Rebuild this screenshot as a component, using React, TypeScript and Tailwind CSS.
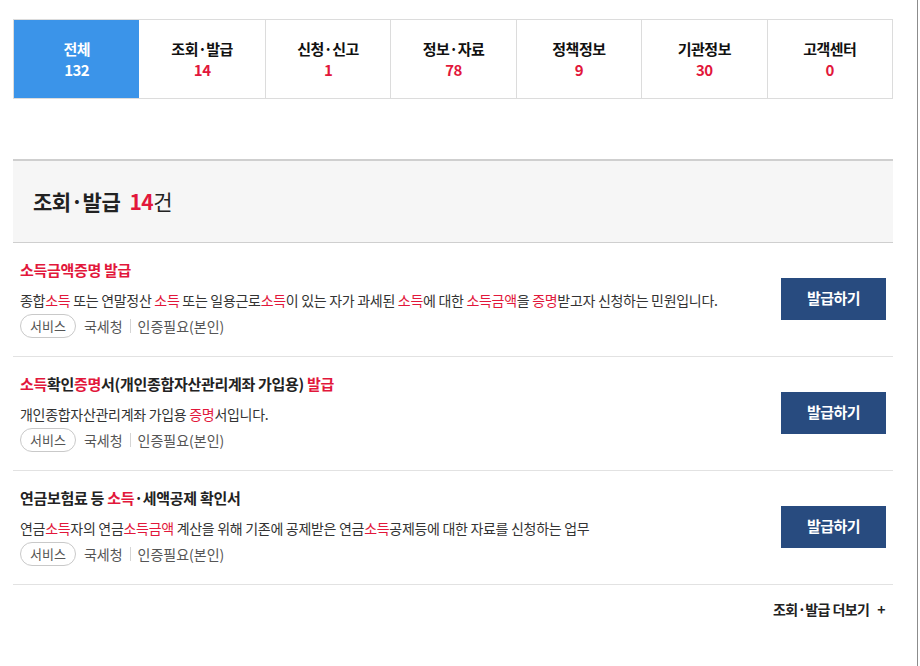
import React from "react"

const tabs = [
  { name: "전체", count: 132 },
  { name: "조회·발급", count: 14 },
  { name: "신청·신고", count: 1 },
  { name: "정보·자료", count: 78 },
  { name: "정책정보", count: 9 },
  { name: "기관정보", count: 30 },
  { name: "고객센터", count: 0 },
]

type Part = string | { hl: string }

interface Item {
  title: Part[]
  desc: Part[]
}

const items: Item[] = [
  {
    title: [{ hl: "소득금액증명 발급" }],
    desc: [
      "종합",
      { hl: "소득" },
      " 또는 연말정산 ",
      { hl: "소득" },
      " 또는 일용근로",
      { hl: "소득" },
      "이 있는 자가 과세된 ",
      { hl: "소득" },
      "에 대한 ",
      { hl: "소득금액" },
      "을 ",
      { hl: "증명" },
      "받고자 신청하는 민원입니다.",
    ],
  },
  {
    title: [{ hl: "소득" }, "확인", { hl: "증명" }, "서(개인종합자산관리계좌 가입용) ", { hl: "발급" }],
    desc: ["개인종합자산관리계좌 가입용 ", { hl: "증명" }, "서입니다."],
  },
  {
    title: ["연금보험료 등 ", { hl: "소득" }, "·세액공제 확인서"],
    desc: [
      "연금",
      { hl: "소득" },
      "자의 연금",
      { hl: "소득금액" },
      " 계산을 위해 기존에 공제받은 연금",
      { hl: "소득" },
      "공제등에 대한 자료를 신청하는 업무",
    ],
  },
]

function Text({ parts }: { parts: Part[] }) {
  return (
    <>
      {parts.map((p, i) =>
        typeof p === "string" ? (
          <span key={i}>{p}</span>
        ) : (
          <span key={i} className="text-[#e2173b]">
            {p.hl}
          </span>
        )
      )}
    </>
  )
}

export default function App() {
  return (
    <div className="w-[918px] min-h-[666px] border-r border-[#8c8c8c] bg-white font-['Noto_Sans_CJK_KR','Noto_Sans',sans-serif] text-[#222]">
      <div className="px-[13px] pt-[19px] w-[906px]">
        <div className="grid grid-cols-7 h-[80px] border border-[#dcdcdc]">
          {tabs.map((t, i) => (
            <div
              key={t.name}
              className={`flex flex-col items-center justify-center font-bold text-[15px] leading-[21px] tracking-[-0.5px] ${
                i === 0 ? "bg-[#3b94e9] text-white" : "border-l border-[#dcdcdc]"
              } ${i === 1 ? "border-l-0" : ""}`}
            >
              <span className={i === 0 ? "" : "text-[#111]"}>{t.name}</span>
              <span className={i === 0 ? "" : "text-[#e2173b]"}>{t.count}</span>
            </div>
          ))}
        </div>

        <div className="mt-[60px] h-[84px] border-t-2 border-b border-[#cfcfcf] bg-[#f6f6f6] flex items-center pl-[20px]">
          <h2 className="text-[21px] font-bold tracking-[-0.5px] text-[#222]">
            조회·발급 <span className="ml-[5px] text-[#e2173b]">14</span>
            <span className="font-normal">건</span>
          </h2>
        </div>

        <ul>
          {items.map((item, i) => (
            <li
              key={i}
              className="flex items-center justify-between border-b border-[#e2e2e2] pl-[7px] pr-[7px] pt-[16px] pb-[18px]"
            >
              <div>
                <p className="text-[15px] leading-[22px] font-bold tracking-[-0.3px] text-[#222]">
                  <Text parts={item.title} />
                </p>
                <p className="mt-[8px] text-[14px] leading-[22px] tracking-[-0.3px] text-[#333]">
                  <Text parts={item.desc} />
                </p>
                <div className="mt-[3px] flex items-center text-[14px] tracking-[0px] text-[#555]">
                  <span className="h-[24px] px-[9px] flex items-center rounded-full border border-[#c9c9c9] text-[13px] text-[#555]">
                    서비스
                  </span>
                  <span className="ml-[8px]">국세청</span>
                  <span className="mx-[7px] h-[14px] w-px bg-[#d5d5d5]" />
                  <span>인증필요(본인)</span>
                </div>
              </div>
              <button className="w-[105px] h-[42px] bg-[#284b7f] text-white text-[15px] font-bold tracking-[-0.6px]">
                발급하기
              </button>
            </li>
          ))}
        </ul>

        <div className="flex justify-end pr-[8px] pt-[14px] text-[14px] font-bold tracking-[-0.6px] text-[#222]">
          조회·발급 더보기
          <span className="ml-[8px]">+</span>
        </div>
      </div>
    </div>
  )
}
